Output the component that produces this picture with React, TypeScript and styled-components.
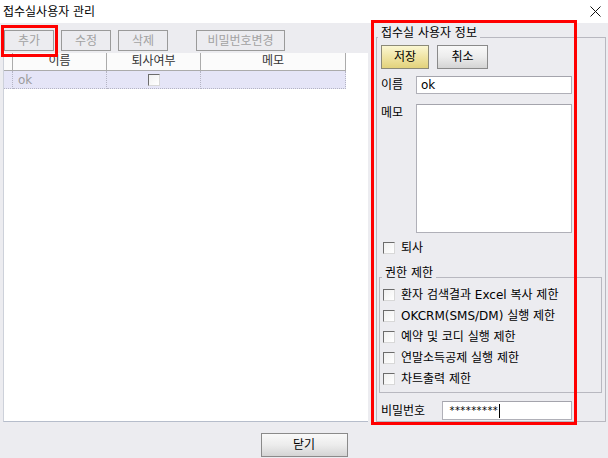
import React from "react";
import styled, { createGlobalStyle, css } from "styled-components";

const GlobalStyle = createGlobalStyle`
  html, body { margin: 0; padding: 0; background: #fff; }
  body {
    font-family: "DejaVu Sans", "Noto Sans CJK KR", sans-serif;
    font-size: 12px;
    color: #000;
  }
  * { box-sizing: border-box; }
`;

const BG = "#ececf0";

const Window = styled.div`
  position: relative;
  width: 608px;
  height: 458px;
  overflow: hidden;
  background: ${BG};
  display: flex;
  flex-direction: column;
`;

const TitleBar = styled.div`
  flex: none;
  height: 23px;
  background: #fff;
  display: flex;
  align-items: center;
  justify-content: space-between;
  padding: 0 7px 0 3px;
  line-height: 14px;
`;

const Main = styled.div`
  flex: none;
  height: 399px;
  display: flex;
`;

const LeftPane = styled.div`
  width: 365px;
  margin-left: 3px;
  display: flex;
  flex-direction: column;
`;

const Toolbar = styled.div`
  flex: none;
  height: 30px;
  padding: 7px 0 2px 1px;
  display: flex;
  gap: 7px;
`;

type BtnVariant = "disabled" | "normal" | "yellow";

const Button = styled.button<{ $w: number; $h: number; $v: BtnVariant; $ml?: number }>`
  width: ${(p) => p.$w}px;
  height: ${(p) => p.$h}px;
  margin: 0 0 0 ${(p) => p.$ml ?? 0}px;
  padding: 0;
  font-family: inherit;
  font-size: 12px;
  line-height: 14px;
  border-radius: 0;
  ${(p) =>
    p.$v === "disabled"
      ? css`
          background: ${BG};
          border: 1px solid #9a9a9a;
          color: #a2a2a2;
        `
      : p.$v === "yellow"
      ? css`
          background: linear-gradient(#fbf7d2, #efe3a0 55%, #e2d27c);
          border: 1px solid #8c8a78;
          color: #000;
        `
      : css`
          background: linear-gradient(#f9f9f9, #ececec 50%, #d4d4d4);
          border: 1px solid #8a8a8a;
          color: #000;
        `}
`;

const Grid = styled.div`
  flex: 1;
  background: #fff;
  border-left: 1px solid #cdd1da;
  border-bottom: 1px solid #b6bdcb;
`;

const Table = styled.div`
  display: grid;
  grid-template-columns: 9px 94px 94px 145px;
`;

const HeadCell = styled.div`
  height: 18px;
  border-right: 1px solid #ababab;
  border-bottom: 1px solid #ababab;
  background: #fbfbfb;
  text-align: center;
  line-height: 17px;
  color: #333;
`;

const RowCell = styled.div<{ $center?: boolean }>`
  height: 18px;
  background: #e5e5f7;
  border-right: 1px dotted #b4b4c4;
  border-bottom: 1px dotted #b4b4c4;
  color: #9c9c9c;
  line-height: 16px;
  padding-left: ${(p) => (p.$center ? 0 : 5)}px;
  display: flex;
  align-items: center;
  justify-content: ${(p) => (p.$center ? "center" : "flex-start")};
`;

const Check = styled.span`
  flex: none;
  display: inline-block;
  width: 12px;
  height: 12px;
  background: linear-gradient(135deg, #f0f0f0, #ffffff);
  border-top: 1px solid #6c6c6c;
  border-left: 1px solid #6c6c6c;
  border-right: 1px solid #d8d8d8;
  border-bottom: 1px solid #d8d8d8;
`;

const GroupBox = styled.div<{ $mt: number; $ml: number; $pl: number; $pr: number; $pb: number }>`
  display: flex;
  flex-direction: column;
  border: 1px solid #b8b8c0;
  margin-top: ${(p) => p.$mt}px;
  margin-left: ${(p) => p.$ml}px;
  padding: 0 ${(p) => p.$pr}px ${(p) => p.$pb}px ${(p) => p.$pl}px;
`;

const Legend = styled.div<{ $ml: number }>`
  align-self: flex-start;
  margin: -12px 0 0 ${(p) => p.$ml}px;
  padding: 0 3px;
  background: ${BG};
  line-height: 14px;
`;

const Row = styled.div<{ $mt: number; $h: number; $top?: boolean }>`
  display: flex;
  align-items: ${(p) => (p.$top ? "flex-start" : "center")};
  margin-top: ${(p) => p.$mt}px;
  height: ${(p) => p.$h}px;
  flex: none;
`;

const ButtonRow = styled.div`
  display: flex;
  gap: 8px;
  margin-top: 5px;
`;

const Label = styled.span<{ $w: number; $mt?: number }>`
  width: ${(p) => p.$w}px;
  flex: none;
  line-height: 14px;
  margin-top: ${(p) => p.$mt ?? 0}px;
`;

const Field = styled.div<{ $w: number; $h: number }>`
  width: ${(p) => p.$w}px;
  height: ${(p) => p.$h}px;
  background: #fff;
  border: 1px solid #b0b0b8;
  border-top-color: #a4a4ac;
  padding-left: 4px;
  display: flex;
  align-items: center;
  font-size: 12px;
  line-height: 15px;
`;

const Stars = styled.span`
  font-family: "DejaVu Sans Mono", monospace;
  font-size: 10px;
  letter-spacing: -0.6px;
  margin-left: 2px;
`;

const Caret = styled.span`
  display: inline-block;
  width: 1px;
  height: 14px;
  background: #000;
  margin-left: 1px;
`;

const CheckLabel = styled.span`
  margin-left: 6px;
  line-height: 14px;
  white-space: nowrap;
`;

const Footer = styled.div`
  flex: none;
  padding-top: 11px;
  display: flex;
  justify-content: center;
`;

const Highlight = styled.div<{ $l: number; $t: number; $w: number; $h: number }>`
  position: absolute;
  left: ${(p) => p.$l}px;
  top: ${(p) => p.$t}px;
  width: ${(p) => p.$w}px;
  height: ${(p) => p.$h}px;
  border: 3px solid #f00;
  pointer-events: none;
`;

const CloseIcon = () => (
  <svg width="11" height="11" viewBox="0 0 11 11">
    <path d="M0.5 0.5 L10.5 10.5 M10.5 0.5 L0.5 10.5" stroke="#111" strokeWidth="1" fill="none" />
  </svg>
);

const permissions = [
  "환자 검색결과 Excel 복사 제한",
  "OKCRM(SMS/DM) 실행 제한",
  "예약 및 코디 실행 제한",
  "연말소득공제 실행 제한",
  "차트출력 제한",
];

export default function App() {
  return (
    <>
      <GlobalStyle />
      <Window>
        <TitleBar>
          <span>접수실사용자 관리</span>
          <CloseIcon />
        </TitleBar>
        <Main>
          <LeftPane>
            <Toolbar>
              <Button $w={50} $h={21} $v="disabled">추가</Button>
              <Button $w={50} $h={21} $v="disabled">수정</Button>
              <Button $w={50} $h={21} $v="disabled">삭제</Button>
              <Button $w={89} $h={21} $v="disabled" $ml={21}>비밀번호변경</Button>
            </Toolbar>
            <Grid>
              <Table>
                <HeadCell />
                <HeadCell>이름</HeadCell>
                <HeadCell>퇴사여부</HeadCell>
                <HeadCell>메모</HeadCell>
                <RowCell $center />
                <RowCell>ok</RowCell>
                <RowCell $center>
                  <Check />
                </RowCell>
                <RowCell />
              </Table>
            </Grid>
          </LeftPane>
          <GroupBox $mt={14} $ml={8} $pl={4} $pr={3} $pb={1} style={{ width: 230 }}>
            <Legend $ml={-3}>접수실 사용자 정보</Legend>
            <ButtonRow>
              <Button $w={48} $h={24} $v="yellow">저장</Button>
              <Button $w={51} $h={24} $v="normal">취소</Button>
            </ButtonRow>
            <Row $mt={7} $h={18}>
              <Label $w={35}>이름</Label>
              <Field $w={156} $h={18}>ok</Field>
            </Row>
            <Row $mt={10} $h={129} $top>
              <Label $w={35} $mt={2}>메모</Label>
              <Field $w={156} $h={129} />
            </Row>
            <Row $mt={8} $h={13}>
              <Check style={{ marginLeft: 2 }} />
              <CheckLabel>퇴사</CheckLabel>
            </Row>
            <GroupBox $mt={23} $ml={-2} $pl={3} $pr={0} $pb={3}>
              <Legend $ml={-1}>권한 제한</Legend>
              <div style={{ height: 4 }} />
              {permissions.map((p) => (
                <Row key={p} $mt={0} $h={21}>
                  <Check />
                  <CheckLabel>{p}</CheckLabel>
                </Row>
              ))}
            </GroupBox>
            <Row $mt={8} $h={19}>
              <Label $w={61}>비밀번호</Label>
              <Field $w={130} $h={19}>
                <Stars>*********</Stars>
                <Caret />
              </Field>
            </Row>
          </GroupBox>
        </Main>
        <Footer>
          <Button $w={87} $h={24} $v="normal">닫기</Button>
        </Footer>
        <Highlight $l={1} $t={25} $w={57} $h={32} />
        <Highlight $l={371} $t={20} $w={206} $h={405} />
      </Window>
    </>
  );
}
